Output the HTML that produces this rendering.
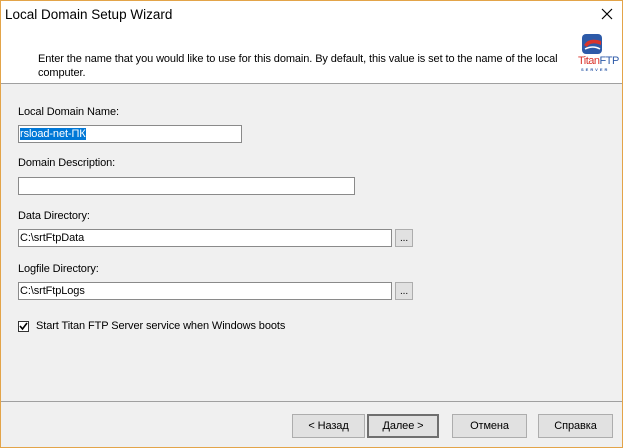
<!DOCTYPE html>
<html><head><style>
body{margin:0;width:623px;height:448px;overflow:hidden;font-family:"Liberation Sans",sans-serif;font-size:11px;letter-spacing:-0.1px;color:#000}
#w{position:absolute;left:0;top:0;width:621px;height:446px;border:1px solid #e3a449;background:#f0f0f0;overflow:hidden}
.a{position:absolute}
.in{position:absolute;background:#fff;border:1px solid #8a8a8a;box-sizing:border-box;height:18px;font-size:11px;line-height:16px;padding-left:1px;white-space:nowrap}
.bb{position:absolute;width:18px;height:18px;box-sizing:border-box;border:1px solid #adadad;background:#e1e1e1;font-size:10px;text-align:center;line-height:18px}
.btn{position:absolute;top:413px;height:24px;box-sizing:border-box;border:1px solid #adadad;background:#e1e1e1;text-align:center;line-height:22px;font-size:11px}
</style></head><body><div id="w">
<div class="a" style="left:0;top:0;width:621px;height:82px;background:#fff"></div>
<div class="a" style="left:0;top:82px;width:621px;height:1px;background:#a0a0a0"></div>
<div class="a" style="left:4px;top:6px;font-size:13.5px;letter-spacing:0">Local Domain Setup Wizard</div>
<svg class="a" style="left:600px;top:7px" width="12" height="12"><path d="M1 1L11 11M11 1L1 11" stroke="#000" stroke-width="1.2"/></svg>
<div class="a" style="left:37px;top:51px;line-height:14px;width:520px">Enter the name that you would like to use for this domain. By default, this value is set to the name of the local computer.</div>
<svg class="a" style="left:580px;top:32px" width="22" height="22"><rect x="1" y="1" width="20" height="20" rx="4" fill="#2d5aa8"/><path d="M3 12Q8 4 20 8L20 12Q10 8 6 14Z" fill="#d9342b"/><path d="M4 16Q12 12 19 16" stroke="#fff" stroke-width="1.5" fill="none"/></svg>
<div class="a" style="left:577px;top:54px;font-size:11px;letter-spacing:-0.5px"><span style="color:#d9342b">Titan</span><span style="color:#2d5aa8">FTP</span></div>
<div class="a" style="left:580px;top:66px;font-size:4px;letter-spacing:2px;color:#2d5aa8;font-weight:bold">SERVER</div>
<div class="a" style="left:17px;top:105px">Local Domain Name:</div>
<div class="in" style="left:17px;top:124px;width:224px"><span style="background:#0078d7;color:#fff">rsload-net-ПК</span></div>
<div class="a" style="left:17px;top:156px">Domain Description:</div>
<div class="in" style="left:17px;top:176px;width:337px"></div>
<div class="a" style="left:17px;top:209px">Data Directory:</div>
<div class="in" style="left:17px;top:228px;width:374px">C:\srtFtpData</div>
<div class="bb" style="left:394px;top:228px">...</div>
<div class="a" style="left:17px;top:262px">Logfile Directory:</div>
<div class="in" style="left:17px;top:281px;width:374px">C:\srtFtpLogs</div>
<div class="bb" style="left:394px;top:281px">...</div>
<div class="a" style="left:17px;top:320px;width:11px;height:11px;border:1px solid #333;background:#fff;box-sizing:border-box"></div>
<svg class="a" style="left:18px;top:321px" width="9" height="9"><path d="M1 4L3.5 7L8 1" stroke="#000" stroke-width="1.6" fill="none"/></svg>
<div class="a" style="left:35px;top:319px">Start Titan FTP Server service when Windows boots</div>
<div class="a" style="left:0;top:400px;width:621px;height:1px;background:#a0a0a0"></div>
<div class="btn" style="left:291px;width:73px">&lt; Назад</div>
<div class="btn" style="left:366px;width:72px;border:2px solid #6f6f6f;line-height:20px">Далее &gt;</div>
<div class="btn" style="left:451px;width:75px">Отмена</div>
<div class="btn" style="left:537px;width:75px">Справка</div>
</div></body></html>
